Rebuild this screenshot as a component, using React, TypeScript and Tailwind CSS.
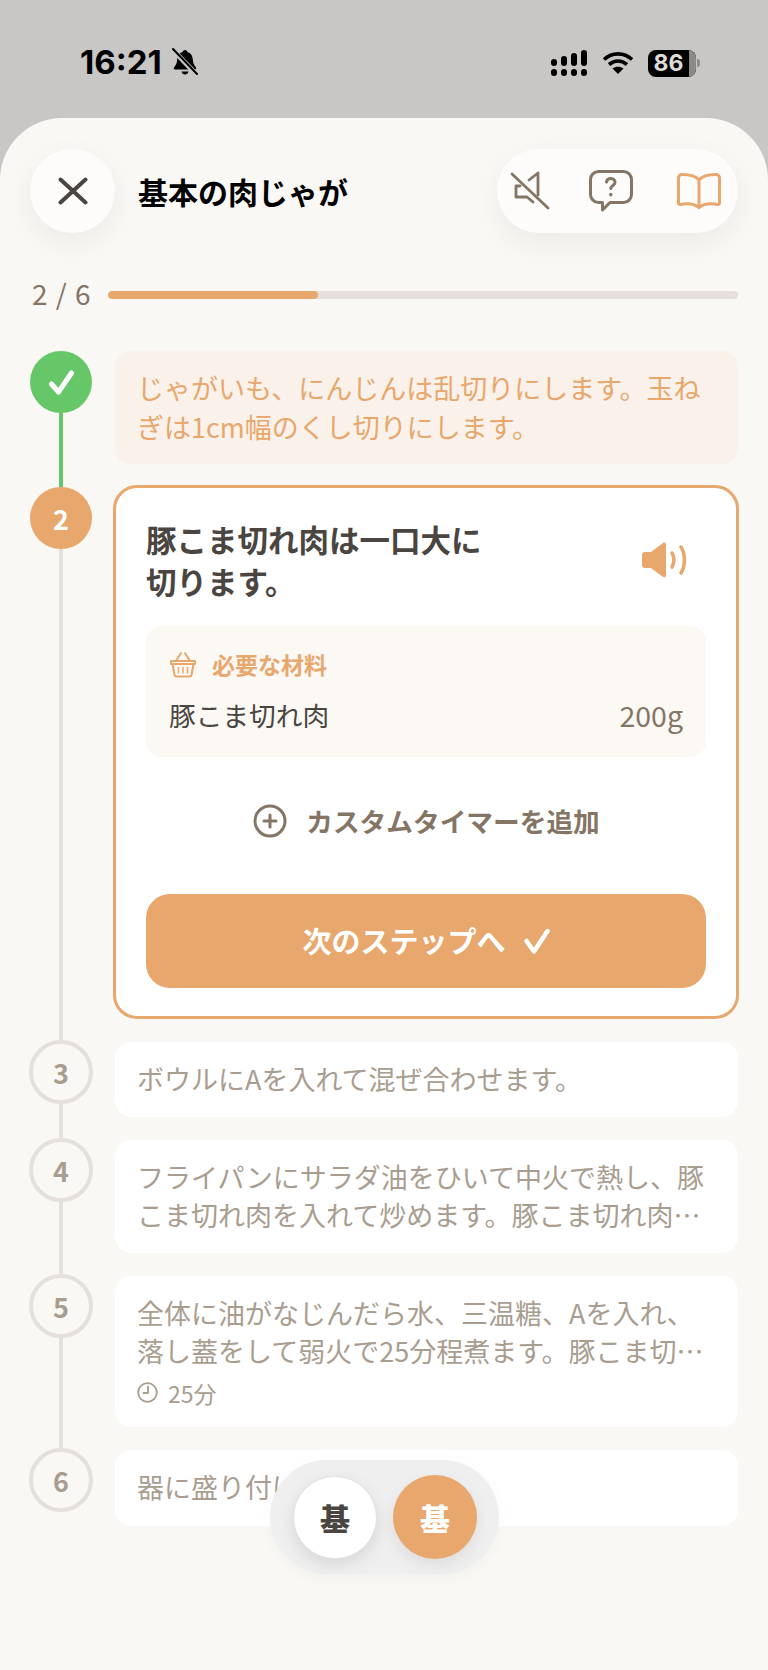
import React from "react";
import { CirclePlus } from "lucide-react";

const font = { fontFamily: '"Noto Sans CJK JP", "Noto Sans", sans-serif' };

function Circle({ n }: { n: number }) {
  return (
    <div className="w-[64px] h-[64px] rounded-full border-[4px] border-[#e5e0dc] bg-[#f9f8f5] flex items-center justify-center text-[#a99d90] text-[27px] font-bold shrink-0 leading-none">
      <span className="mt-[1px]">{n}</span>
    </div>
  );
}

function Line() {
  return <div className="w-[4px] flex-1 bg-[#e5e0dc]" />;
}

function Step({ n, text, last, time }: { n: number; text: string; last?: boolean; time?: string }) {
  return (
    <div className="flex gap-[22px]">
      <div className="w-[64px] flex flex-col items-center shrink-0">
        <Circle n={n} />
        {!last && <Line />}
      </div>
      <div className={`flex-1 mt-[2px] bg-white rounded-[16px] pl-[22px] pr-[24px] pt-[18px] ${time ? "pb-[20px]" : last ? "pb-[20px]" : "pb-[18px]"} ${last ? "" : "mb-[21px]"}`}>
        <p className="line-clamp-2 text-[27px] leading-[38.5px] text-[#a99d90]">{text}</p>
        {time && (
          <div className="flex items-center gap-[10px] text-[#a99d90] text-[23px] mt-[8px] leading-[28px]">
            <svg width="21" height="21" viewBox="0 0 21 21" fill="none" stroke="#a99d90" strokeWidth="1.800" strokeLinecap="round" strokeLinejoin="round">
              <circle cx="10.500" cy="10.500" r="9.300" />
              <path d="M11 4.500v6.500H6.500" />
            </svg>
            <span>{time}</span>
          </div>
        )}
      </div>
    </div>
  );
}

export default function App() {
  return (
    <div className="relative w-[768px] h-[1670px] overflow-hidden bg-[#c8c7c5] flex flex-col" style={font}>
      {/* status bar */}
      <div className="h-[118px] shrink-0 flex items-start justify-between pl-[80px] pr-[68px] pt-[44px] text-black">
        <div className="flex items-center gap-[9px] h-[36px]">
          <span className="text-[33px] font-bold leading-none" style={{ fontFamily: "Inter, sans-serif" }}>16:21</span>
          <svg width="28" height="28" viewBox="0 0 28 28">
            <path d="M14 2c1.400 0 2.200 1 2.400 2 3.600 1 5.100 4 5.400 7.600.2 3.400 1 5.400 3.200 7.900.6.800.2 2-1 2H4c-1.200 0-1.600-1.200-1-2 2.200-2.500 3-4.500 3.200-7.900.3-3.600 1.800-6.600 5.400-7.600.2-1 1-2 2.400-2z" fill="#000" />
            <path d="M10.500 23.500h7c-.4 1.800-1.800 3-3.500 3s-3.100-1.200-3.500-3z" fill="#000" />
            <path d="M1 1l25 26" stroke="#c8c7c5" strokeWidth="5" />
            <path d="M2 1l24 25" stroke="#000" strokeWidth="2" strokeLinecap="round" />
          </svg>
        </div>
        <div className="flex items-center gap-[14px] h-[32px] mt-[3px]">
          <svg width="38" height="26" viewBox="0 0 38 26" fill="#000">
            <rect x="1" y="9" width="6" height="7" rx="3" />
            <rect x="11" y="6" width="6" height="10" rx="3" />
            <rect x="21" y="3" width="6" height="13" rx="3" />
            <rect x="31" y="0" width="6" height="16" rx="3" />
            <rect x="1" y="19" width="6" height="7" rx="3" />
            <rect x="11" y="19" width="6" height="7" rx="3" />
            <rect x="21" y="19" width="6" height="7" rx="3" />
            <rect x="31" y="19" width="6" height="7" rx="3" />
          </svg>
          <svg width="32" height="24" viewBox="0 0 32 24" fill="none" stroke="#000" strokeWidth="3.600">
            <path d="M2 8.500C10 1 22 1 30 8.500" />
            <path d="M7 13.500c5.500-4.500 12.500-4.500 18 0" />
            <path d="M16 23l-5.500-5.500c3.300-2.400 7.700-2.400 11 0z" fill="#000" stroke="none" />
          </svg>
          <div className="flex items-center">
            <div className="w-[48px] h-[27px] rounded-[8px] bg-black overflow-hidden relative flex items-center">
              <span className="w-[41px] text-center text-[#dddcd9] text-[23px] font-bold leading-none" style={{ fontFamily: "Inter, sans-serif" }}>86</span>
              <div className="absolute right-0 top-0 bottom-0 w-[7px] bg-[#8b8a88]" />
            </div>
            <div className="w-[3px] h-[8px] ml-[1px] rounded-r-full bg-[#8b8a88]" />
          </div>
        </div>
      </div>

      {/* sheet */}
      <div className="relative flex-1 bg-[#f9f8f5] rounded-t-[62px] px-[29px] pt-[31px]">
        {/* header */}
        <div className="flex items-center pl-px pr-[1px] h-[84px]">
          <div className="w-[85px] h-[84px] rounded-full bg-[#fdfcfa] shadow-[0_10px_30px_rgba(0,0,0,0.06)] flex items-center justify-center text-[#4a4540]">
            <svg width="30" height="28" viewBox="0 0 30 28" fill="none" stroke="#4a4540" strokeWidth="4" strokeLinecap="round">
              <path d="M2.500 2.500l25 23M27.500 2.500l-25 23" />
            </svg>
          </div>
          <h1 className="ml-[23px] text-[30px] font-bold text-black flex-1">基本の肉じゃが</h1>
          <div className="w-[241px] h-[84px] rounded-full bg-[#fdfcfa] shadow-[0_10px_30px_rgba(0,0,0,0.06)] flex items-center pl-[13px] pr-[17px] justify-between">
            <svg width="40" height="40" viewBox="0 0 40 40" fill="none" stroke="#857565" strokeWidth="2.800" strokeLinecap="round" strokeLinejoin="round">
              <path d="M2 3l36 34" />
              <path d="M28 24V2l-9 7" />
              <path d="M10 15H6v11h11l6 5" />
            </svg>
            <svg className="mr-[6px]" width="44" height="42" viewBox="0 0 44 42" fill="none" stroke="#857565" strokeWidth="3" strokeLinecap="round" strokeLinejoin="round">
              <path d="M9.500 1.500h25c4.400 0 8 3.600 8 8v15c0 4.400-3.600 8-8 8H21l-7.500 7.500V32.500h-4c-4.400 0-8-3.600-8-8v-15c0-4.400 3.600-8 8-8z" />
              <path d="M17.500 12c.4-2.300 2.300-3.500 4.500-3.400 2.500.1 4.200 1.800 4 3.900-.2 1.700-1.300 2.500-2.600 3.400-1 .7-1.600 1.300-1.600 2.600" />
              <path d="M21.800 24.500v.2" strokeWidth="3.400" />
            </svg>
            <svg width="44" height="36" viewBox="0 0 44 36" fill="none" stroke="#e8a76c" strokeWidth="3" strokeLinecap="round" strokeLinejoin="round">
              <path d="M22 7C19 3 14 1.500 5 1.500 3 1.500 1.500 3 1.500 5v25c0 1 .7 1.600 1.700 1.500C10 30 17 30.500 22 34.500 27 30.500 34 30 40.800 31.500c1 .1 1.700-.5 1.700-1.500V5c0-2-1.500-3.500-3.500-3.500-9 0-14 1.500-17 5.500zM22 7v27" />
            </svg>
          </div>
        </div>

        {/* progress */}
        <div className="flex items-center h-[30px] mt-[47px] gap-[16px] pl-[3px] pr-px">
          <span className="text-[28px] font-normal tracking-[1px] text-[#857565] w-[60px] leading-none whitespace-nowrap -mt-[4px]">2 / 6</span>
          <div className="flex-1 h-[8px] rounded-full bg-[#e5e0dc] overflow-hidden">
            <div className="w-[210px] h-full bg-[#e8a76c] rounded-full" />
          </div>
        </div>

        {/* steps */}
        <div className="mt-[41px] pr-px">
          {/* step 1 */}
          <div className="flex gap-[22px]">
            <div className="w-[64px] flex flex-col items-center shrink-0">
              <div className="w-[62px] h-[62px] rounded-full bg-[#66c768] flex items-center justify-center shrink-0">
                <svg width="27" height="25" viewBox="0 0 27 25" fill="none" stroke="#fff" strokeWidth="5" strokeLinecap="round" strokeLinejoin="round">
                  <path d="M3.500 14l7 8L23.500 3" />
                </svg>
              </div>
              <div className="w-[4px] flex-1 bg-[#66c768]" />
            </div>
            <div className="flex-1 mb-[23px] bg-[#f9f1ea] rounded-[16px] pl-[22px] pr-[24px] pt-[18px] pb-[18px]">
              <p className="text-[27px] leading-[38.5px] text-[#e8a76c]">じゃがいも、にんじんは乱切りにします。玉ねぎは1cm幅のくし切りにします。</p>
            </div>
          </div>

          {/* step 2 */}
          <div className="flex gap-[22px]">
            <div className="w-[64px] flex flex-col items-center shrink-0">
              <div className="w-[62px] h-[62px] rounded-full bg-[#e8a76c] flex items-center justify-center text-white text-[27px] font-bold shrink-0 leading-none">
                <span>2</span>
              </div>
              <Line />
            </div>
            <div className="flex-1 -mt-[2px] mb-[21px] -ml-[2px] -mr-px border-[3px] border-[#e8a76c] rounded-[24px] bg-white px-[30px] pt-[30px] pb-[28px]">
              <div className="flex items-start justify-between">
                <h2 className="w-[345px] text-[30.5px] leading-[42px] font-bold text-[#4a4540]">豚こま切れ肉は一口大に切ります。</h2>
                <svg className="mt-[24px] mr-[18px]" width="46" height="36" viewBox="0 0 46 36" fill="#e8a76c">
                  <path d="M3 10h6l12-9c1.500-1 3-.2 3 1.500v31c0 1.700-1.500 2.500-3 1.500L9 26H3c-1.700 0-3-1.300-3-3V13c0-1.700 1.300-3 3-3z" />
                  <path d="M30 11c2.500 4 2.500 10 0 14" fill="none" stroke="#e8a76c" strokeWidth="3.500" strokeLinecap="round" />
                  <path d="M39 5c4.500 7 4.500 19 0 26" fill="none" stroke="#e8a76c" strokeWidth="3.500" strokeLinecap="round" />
                </svg>
              </div>
              <div className="mt-[24px] bg-[#fcf8f4] rounded-[16px] px-[23px] pt-[22px] h-[131px]">
                <div className="flex items-center gap-[15px] h-[32px]">
                  <svg width="28" height="27" viewBox="0 0 28 27" fill="none" stroke="#e8a76c" strokeWidth="2" strokeLinecap="round" strokeLinejoin="round">
                    <path d="M2 10h24v3H2z" />
                    <path d="M3.500 13l2 11c.2 1 1 1.500 2 1.500h13c1 0 1.800-.5 2-1.500l2-11" />
                    <path d="M7 10l5-8M21 10l-5-8" />
                    <path d="M9.500 16.500v5.500M14 16.500v5.500M18.500 16.500v5.500" strokeWidth="1.500" />
                  </svg>
                  <span className="text-[23px] font-bold text-[#e8a76c] leading-none">必要な材料</span>
                </div>
                <div className="flex items-center justify-between mt-[16px] h-[38px]">
                  <span className="text-[26.7px] text-[#4a4540]">豚こま切れ肉</span>
                  <span className="text-[28.5px] text-[#857565]">200g</span>
                </div>
              </div>
              <div className="mt-[48px] h-[32px] flex items-center justify-center gap-[18px] text-[#857565]">
                <CirclePlus size={36} strokeWidth={2} />
                <span className="text-[26.7px] font-bold whitespace-nowrap">カスタムタイマーを追加</span>
              </div>
              <div className="mt-[57px] h-[94px] rounded-[24px] bg-[#e8a76c] flex items-center justify-center gap-[18px] text-white">
                <span className="text-[29px] font-bold whitespace-nowrap">次のステップへ</span>
                <svg width="26" height="26" viewBox="0 0 26 26" fill="none" stroke="#fff" strokeWidth="4.500" strokeLinecap="round" strokeLinejoin="round">
                  <path d="M2.500 13l7.500 10.500L23.500 3" />
                </svg>
              </div>
            </div>
          </div>

          <Step n={3} text="ボウルにAを入れて混ぜ合わせます。" />
          <Step n={4} text="フライパンにサラダ油をひいて中火で熱し、豚こま切れ肉を入れて炒めます。豚こま切れ肉の色が変わったらじゃがいも、にんじん、玉ねぎを加えて炒めます。" />
          <Step n={5} text="全体に油がなじんだら水、三温糖、Aを入れ、落し蓋をして弱火で25分程煮ます。豚こま切れ肉に火が通ったら火を止めます。" time="25分" />
          <Step n={6} text="器に盛り付けます。" last />
        </div>

        {/* floating toggle */}
        <div className="absolute left-[270px] top-[1342px] w-[229px] h-[114px] rounded-full bg-[#efefef] shadow-[0_4px_16px_rgba(0,0,0,0.03)] flex items-center pl-[23px] gap-[16px]">
          <div className="w-[84px] h-[83px] rounded-full bg-white border border-[#e5e0dc] shadow-[0_6px_16px_rgba(0,0,0,0.1)] flex items-center justify-center text-[#4a4540] text-[30px] font-black">基</div>
          <div className="w-[84px] h-[84px] rounded-full bg-[#e8a76c] shadow-[0_6px_16px_rgba(0,0,0,0.08)] flex items-center justify-center text-white text-[30px] font-black">基</div>
        </div>
      </div>
    </div>
  );
}
